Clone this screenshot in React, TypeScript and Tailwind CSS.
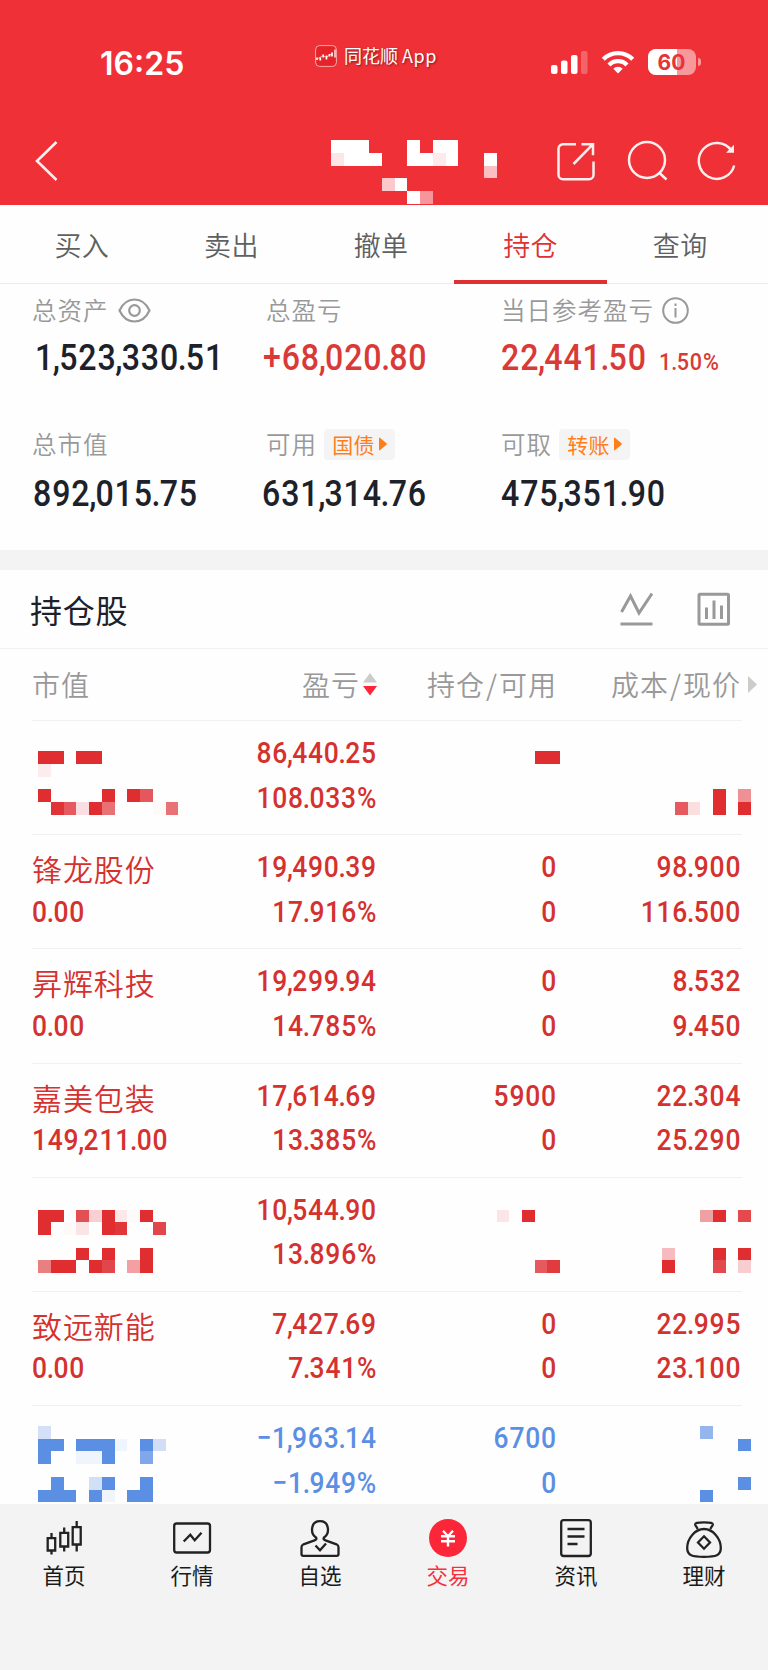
import type { ReactNode } from "react";
import clsx from "clsx";

const TABS = ["买入", "卖出", "撤单", "持仓", "查询"];

type Holding = {
  name?: string;
  value?: string;
  profit: string;
  rate: string;
  position?: string[];
  price?: string[];
  down?: boolean;
};

const HOLDINGS: Holding[] = [
  { profit: "86,440.25", rate: "108.033%" },
  { name: "锋龙股份", value: "0.00", profit: "19,490.39", rate: "17.916%", position: ["0", "0"], price: ["98.900", "116.500"] },
  { name: "昇辉科技", value: "0.00", profit: "19,299.94", rate: "14.785%", position: ["0", "0"], price: ["8.532", "9.450"] },
  { name: "嘉美包装", value: "149,211.00", profit: "17,614.69", rate: "13.385%", position: ["5900", "0"], price: ["22.304", "25.290"] },
  { profit: "10,544.90", rate: "13.896%" },
  { name: "致远新能", value: "0.00", profit: "7,427.69", rate: "7.341%", position: ["0", "0"], price: ["22.995", "23.100"] },
  { profit: "−1,963.14", rate: "−1.949%", position: ["6700", "0"], down: true },
];

// mosaic blocks: [row, column, length, color]
const CELL = 12.732;
const R = "#df2d30";
const B = "#5a8fe4";
const MOSAIC: [number, number, number, string][] = [
  [11, 26, 3, "#fff"], [11, 32, 1, "#fff"], [11, 34, 2, "#fffdfd"],
  [12, 26, 1, "#fde6e8"], [12, 27, 3, "#fff"], [12, 32, 2, "#fff"], [12, 34, 1, "#fdeaec"], [12, 35, 1, "#fff"], [12, 38, 1, "#fff"],
  [13, 38, 1, "#f9bfc2"],
  [14, 30, 1, "#fbc9cc"], [14, 31, 1, "#fff"],
  [15, 32, 1, "#fff"], [15, 33, 1, "#f6959a"],

  [59, 3, 2, R], [59, 6, 2, R], [59, 42, 2, R],
  [60, 3, 1, "#fdecee"],
  [62, 3, 1, R], [62, 8, 1, R], [62, 10, 1, R], [62, 11, 1, "#e5575c"], [62, 56, 1, R], [62, 58, 1, "#ef9194"],
  [63, 4, 1, "#e03338"], [63, 5, 1, "#e5595f"], [63, 6, 1, "#fbdee1"], [63, 7, 1, R], [63, 8, 1, "#e87175"], [63, 12, 1, "#fefafa"],
  [63, 13, 1, "#e87175"], [63, 53, 1, "#e5595f"], [63, 54, 1, "#fbdee0"], [63, 56, 1, R], [63, 58, 1, R],

  [95, 3, 2, R], [95, 6, 1, "#e35054"], [95, 7, 1, "#f9d0d2"], [95, 8, 1, R], [95, 9, 1, "#fde8e9"], [95, 10, 1, "#fefafa"],
  [95, 11, 1, R], [95, 39, 1, "#fce5e6"], [95, 41, 1, R], [95, 55, 1, "#efa0a3"], [95, 56, 1, R], [95, 58, 1, "#e3494d"],
  [96, 3, 1, R], [96, 5, 1, "#fefafa"], [96, 6, 1, "#fbe4e6"], [96, 8, 1, R], [96, 9, 1, "#e0373a"], [96, 12, 1, "#e2454a"],
  [98, 6, 1, R], [98, 8, 1, R], [98, 11, 1, R], [98, 52, 1, "#f5bbbe"], [98, 56, 1, R], [98, 58, 1, R],
  [99, 3, 1, "#ea7f82"], [99, 4, 2, R], [99, 7, 1, R], [99, 8, 1, "#e2454a"], [99, 10, 1, "#f2a0a3"], [99, 11, 1, R],
  [99, 42, 1, "#e5595f"], [99, 43, 1, "#e13a3f"], [99, 52, 1, R], [99, 56, 1, "#e3494d"], [99, 58, 1, "#f8cdd0"],

  [112, 3, 1, "#d3e0f7"], [112, 55, 1, "#95b5ed"],
  [113, 3, 2, B], [113, 6, 3, B], [113, 9, 1, "#eff5fd"], [113, 11, 1, B], [113, 12, 1, "#d1def6"], [113, 58, 1, B],
  [114, 3, 1, B], [114, 6, 2, "#eff4fd"], [114, 8, 1, B], [114, 11, 1, "#7fa7ea"],
  [116, 4, 1, B], [116, 7, 1, "#d1dff7"], [116, 8, 1, B], [116, 11, 1, B], [116, 58, 1, B],
  [117, 3, 3, B], [117, 7, 1, B], [117, 8, 1, "#eff4fd"], [117, 10, 2, B], [117, 55, 1, B],
];

function Mosaic() {
  return (
    <svg className="absolute left-0 top-0 pointer-events-none" width="768" height="1502" shapeRendering="crispEdges">
      {MOSAIC.map(([row, col, len, fill]) => (
        <rect key={`${row}-${col}`} x={col * CELL} y={row * CELL} width={len * CELL} height={CELL} fill={fill} />
      ))}
    </svg>
  );
}

// condensed digits with tighter commas and dots
function Num({ children, right }: { children: string; right?: boolean }) {
  return (
    <span
      className={clsx(
        "inline-block whitespace-nowrap font-['Roboto',sans-serif] font-medium scale-x-[0.88]",
        right ? "origin-right -mr-[1px]" : "origin-left"
      )}
    >
      {children.split(/([.,])/).map((part, i) =>
        i % 2 ? <span key={i} className="-ml-[0.04em] -mr-[0.055em]">{part}</span> : part
      )}
    </span>
  );
}

function StatusBar() {
  return (
    <div className="h-[124px] flex items-center">
      <div className="w-[315px] pl-[100px] pt-[3px] font-['Inter',sans-serif] font-semibold text-[32px] leading-none">16:25</div>
      <div className="w-[234px] flex items-center gap-[7px] pb-[12px]">
        <svg width="22" height="22" viewBox="0 0 22 22" fill="none">
          <rect x="0.6" y="0.6" width="20.8" height="20.8" rx="4" fill="#e52328" stroke="#fff" strokeOpacity="0.6" />
          <path d="M2 12.500v2.500M5.300 12.500v3M8.200 9.500v3M11.500 10.500v4M14.500 9v2.500M17 7.500v4" stroke="#fff" strokeWidth="1.700" />
          <path d="M3 13.500l5-3 3 2 6-4" stroke="#fff" strokeWidth="0.6" />
          <path d="M20 4.500v8" stroke="#fff" strokeWidth="1.300" />
        </svg>
        <span className="pb-[2px] text-[18px] leading-none [text-shadow:1px_1px_2px_rgba(0,0,0,0.45)]">
          同花顺<span className="ml-[4px] tracking-[0.600px]">App</span>
        </span>
      </div>
      <div className="flex items-center">
        <svg width="40" height="26" viewBox="0 0 40 26" fill="#fff">
          <rect x="2" y="16" width="6.500" height="9" rx="2" />
          <rect x="12" y="11.500" width="6.500" height="13.500" rx="2" />
          <rect x="22" y="6" width="6.500" height="19" rx="2" />
          <rect x="32" y="2" width="6.500" height="23" rx="2" fillOpacity="0.25" />
        </svg>
        <svg className="ml-[12px]" width="34" height="26" viewBox="0 0 34 26" fill="none" stroke="#fff" strokeWidth="4.300">
          <path d="M2.300 10.200a20.600 20.600 0 0 1 29.400 0" />
          <path d="M8 15.900a12.600 12.600 0 0 1 18 0" />
          <path d="M17 24.500l-4.700-4.700a6.600 6.600 0 0 1 9.400 0z" fill="#fff" stroke="none" />
        </svg>
        <div className="ml-[13px] relative w-[48px] h-[26px] rounded-[8px] overflow-hidden bg-white/50">
          <div className="w-[29px] h-full bg-white" />
          <span className="absolute inset-0 pt-[1px] pr-[1px] flex items-center justify-center text-[#e5343a] text-[21px] font-bold font-['Inter',sans-serif]">
            60
          </span>
        </div>
        <div className="ml-[2px] w-[2.500px] h-[8px] rounded-r-full bg-white/50" />
      </div>
    </div>
  );
}

function NavBar() {
  return (
    <div className="h-[74px] flex items-center pl-[34px] pr-[31px]">
      <svg className="mr-auto" width="26" height="42" viewBox="0 0 26 42" fill="none" stroke="#ffeeee" strokeWidth="2.600">
        <path d="M22.500 2L3 21l19.500 19" />
      </svg>
      <svg width="40" height="40" viewBox="0 0 40 40" fill="none" stroke="#ffeeee" strokeWidth="2.500" strokeLinejoin="round">
        <path d="M20 3.200H7a4.500 4.500 0 0 0-4.500 4.500v26a4.500 4.500 0 0 0 4.500 4.500h26a4.500 4.500 0 0 0 4.500-4.500V20.500" />
        <path d="M25.500 3.200H37v11M36.500 3.700L17.500 23" strokeLinejoin="miter" />
      </svg>
      <svg className="ml-[31px]" width="42" height="42" viewBox="0 0 42 42" fill="none" stroke="#ffeeee" strokeWidth="2.500">
        <circle cx="20" cy="20" r="18" />
        <path d="M32.500 33l7 6.500" />
      </svg>
      <svg className="ml-[28px]" width="40" height="40" viewBox="0 0 40 40" fill="none" stroke="#ffeeee" strokeWidth="2.500">
        <path d="M37.200 24.500A18 18 0 1 1 34.500 9.500" />
        <path d="M37 3.800v8h-8z" fill="#ffeeee" stroke="none" />
      </svg>
    </div>
  );
}

function Label({ children }: { children: ReactNode }) {
  return <div className="h-[32px] flex items-center text-[24.500px] leading-none tracking-[1px] text-[#999] whitespace-nowrap">{children}</div>;
}

function Tag({ children }: { children: ReactNode }) {
  return (
    <span className="ml-[7px] w-[71px] h-[31px] rounded-[4px] bg-[#f4f4f4] flex items-center justify-center gap-[4px] text-[21px] tracking-[0.200px] text-[#ff7e1c] font-normal">
      {children}
      <svg width="8" height="14" viewBox="0 0 8 14" fill="#ff7e1c">
        <path d="M0 1.500Q0 0 1.200 1L7.500 6.300Q8 7 7.500 7.700L1.200 13Q0 14 0 12.500z" />
      </svg>
    </span>
  );
}

function Summary() {
  return (
    <div className="h-[266px] pl-[32px] grid grid-cols-[234px_235px_1fr] grid-rows-[134px_132px] font-[350]">
      <div className="pt-[10px]">
        <Label>
          总资产
          <svg className="ml-[9px]" width="33" height="25" viewBox="0 0 33 25" fill="none" stroke="#999" strokeWidth="2.200">
            <path d="M1.500 12.500C5 5 10.500 1.500 16.500 1.500S28 5 31.500 12.500C28 20 22.500 23.500 16.500 23.500S5 20 1.500 12.500z" />
            <circle cx="16.500" cy="12.500" r="5.300" />
          </svg>
        </Label>
        <div className="h-[65px] flex items-center pl-[3px] text-[36.500px] text-[#1d2129] tracking-[1px]"><Num>1,523,330.51</Num></div>
      </div>
      <div className="pt-[10px]">
        <Label>总盈亏</Label>
        <div className="h-[65px] flex items-center -ml-[3px] text-[36.500px] text-[#d93a36] tracking-[1px]"><Num>+68,020.80</Num></div>
      </div>
      <div className="pt-[10px]">
        <Label>
          当日参考盈亏
          <svg className="ml-[8px]" width="27" height="27" viewBox="0 0 27 27" fill="none" stroke="#999" strokeWidth="2">
            <circle cx="13.500" cy="13.500" r="12.300" />
            <path d="M13.500 11v9.500M13.500 6.500v2.500" />
          </svg>
        </Label>
        <div className="h-[65px] flex items-center text-[#d93a36]">
          <span className="w-[158px] flex text-[36.500px] tracking-[1px]"><Num>22,441.50</Num></span>
          <span className="pt-[8px] flex text-[24.500px] tracking-[0.900px]"><Num>1.50%</Num></span>
        </div>
      </div>
      <div className="pt-[10px]">
        <Label>总市值</Label>
        <div className="h-[69px] flex items-center pl-[1px] text-[36.500px] text-[#1d2129] tracking-[1px]"><Num>892,015.75</Num></div>
      </div>
      <div className="pt-[10px]">
        <Label>可用<Tag>国债</Tag></Label>
        <div className="h-[69px] flex items-center -ml-[4px] text-[36.500px] text-[#1d2129] tracking-[1px]"><Num>631,314.76</Num></div>
      </div>
      <div className="pt-[10px]">
        <Label>可取<Tag>转账</Tag></Label>
        <div className="h-[69px] flex items-center text-[36.500px] text-[#1d2129] tracking-[1px]"><Num>475,351.90</Num></div>
      </div>
    </div>
  );
}

function Pair({ values = [] }: { values?: string[] }) {
  return (
    <div className="text-right">
      {values.map((v, i) => (
        <div key={i} className="h-[44.500px]"><Num right>{v}</Num></div>
      ))}
    </div>
  );
}

function HoldingRow({ item }: { item: Holding }) {
  return (
    <div
      className={clsx(
        "shrink-0 h-[114.200px] ml-[32px] w-[710px] pt-[7px] border-b border-[#f1f1f1] grid grid-cols-[190px_154px_180px_184px] text-[30px] leading-[44.500px] tracking-[0.900px]",
        item.down ? "text-[#5a8fe4]" : "text-[#d5312f]"
      )}
    >
      <div className="whitespace-nowrap">
        <div className="h-[44.500px] pt-[4px] font-[350]">{item.name}</div>
        <div className="h-[44.500px]">{item.value && <Num>{item.value}</Num>}</div>
      </div>
      <Pair values={[item.profit, item.rate]} />
      <Pair values={item.position} />
      <Pair values={item.price} />
    </div>
  );
}

function NavItem({ label, active, children }: { label: string; active?: boolean; children: ReactNode }) {
  return (
    <div className={clsx("w-[128px] flex flex-col items-center", active ? "text-[#f5303c]" : "text-[#1a1a1a]")}>
      <svg width="44" height="44" viewBox="0 0 44 44" fill="none" stroke="#222" strokeWidth="2.300">
        {children}
      </svg>
      <span className="mt-[1px] text-[21.500px] leading-[28px]">{label}</span>
    </div>
  );
}

function BottomNav() {
  return (
    <div className="h-[166px] pt-[12px] flex bg-[#f3f3f3]">
      <NavItem label="首页">
        <path d="M9.500 17v5M9.500 34.500v4M22.200 11.500v5M22.200 30.500v5M34.700 5v6M34.700 28.500v7" />
        <path d="M5.700 22.200h7.500v12.300H5.700zM18.300 16.800h7.900v13.700h-7.900zM30.700 11.200h8v17.300h-8z" />
      </NavItem>
      <NavItem label="行情">
        <rect x="4.200" y="7.500" width="35.800" height="29" rx="2.500" />
        <path d="M13.700 25.500l6.600-6.800 4.400 5.600 6.800-7.600" />
      </NavItem>
      <NavItem label="自选">
        <path d="M18 21.500C12 17.500 12.500 5.200 22 5.200s10 12.300 4 16.300c-1 1.500 0 2.300 1.500 2.800l11 4c1.500.7 2 1.500 2 3V38c0 1.200-.7 1.800-1.800 1.800H5.300c-1.100 0-1.800-.6-1.800-1.800v-6.700c0-1.500.5-2.300 2-3l11-4c1.500-.5 2.500-1.300 1.500-2.800z" />
        <path d="M17.500 29.500l4.500 4.700 6-6.700" />
      </NavItem>
      <NavItem label="交易" active>
        <circle cx="22" cy="22" r="19" fill="#fb2638" stroke="none" />
        <path d="M17 14.800l5 5.400 5-5.400M15 20.300h14M15 25.200h14M22 20v10.500" stroke="#fff" strokeWidth="2.400" />
      </NavItem>
      <NavItem label="资讯">
        <rect x="7.200" y="4.200" width="29.600" height="35.800" rx="2.500" />
        <path d="M13.500 13h17M13.500 20.500h17M13.500 28h10" />
      </NavItem>
      <NavItem label="理财">
        <path d="M15.500 13c-.5-2-2-3-2.300-4.300C13 7 15 6.300 22 6.300s9 .7 8.800 2.400C30.500 10 29 11 28.500 13" />
        <path d="M22 13c-9 0-16.800 9.500-16.800 19 0 7.500 5 8.800 16.800 8.800s16.800-1.300 16.800-8.800C38.800 22.500 31 13 22 13z" />
        <path d="M22 20.300l6 6.200-6 6.200-6-6.200z" />
      </NavItem>
    </div>
  );
}

export default function App() {
  return (
    <div className="relative w-[768px] h-[1670px] overflow-hidden flex flex-col bg-[#fefefe] font-['Noto_Sans_CJK_SC',sans-serif]">
      <div className="h-[205px] shrink-0 bg-[#ef3036] text-white">
        <StatusBar />
        <NavBar />
      </div>

      <div className="h-[79px] shrink-0 pl-[7px] pr-[13px] flex border-b border-[#ebebeb]">
        {TABS.map((tab) => (
          <div
            key={tab}
            className={clsx(
              "relative flex-1 h-[79px] pt-[2px] flex items-center justify-center text-[27px] tracking-[0.300px] font-[350]",
              tab === "持仓" ? "text-[#e03032]" : "text-[#606060]"
            )}
          >
            {tab}
            {tab === "持仓" && <span className="absolute -inset-x-[2px] bottom-0 h-[4px] bg-[#e03032]" />}
          </div>
        ))}
      </div>

      <Summary />
      <div className="h-[20px] shrink-0 bg-[#f3f3f3]" />

      <div className="h-[79px] shrink-0 pl-[30px] pr-[38px] flex items-center justify-between border-b border-[#f1f1f1]">
        <h2 className="text-[32px] leading-none tracking-[0.800px] text-[#1d2129]">持仓股</h2>
        <div className="flex items-center gap-[44px]">
          <svg width="33" height="34" viewBox="0 0 33 34" fill="none" stroke="#999" strokeWidth="3">
            <path d="M1.500 20L10.500 4l8.500 17L32 1.500M0.500 32H32.500" />
          </svg>
          <svg width="33" height="34" viewBox="0 0 33 34" fill="none" stroke="#999" strokeWidth="3">
            <rect x="2" y="2.200" width="29.500" height="30" rx="1" />
            <path d="M9.500 15.500v11.500M17 8.500V27M24.500 13.500V27" />
          </svg>
        </div>
      </div>

      <div className="h-[72px] shrink-0 ml-[32px] w-[710px] pb-[1px] flex items-center border-b border-[#f1f1f1] text-[28px] tracking-[1px] text-[#999] font-[350] whitespace-nowrap">
        <div className="w-[190px] shrink-0">市值</div>
        <div className="w-[155px] shrink-0 flex items-center justify-end gap-[3px]">
          盈亏
          <svg width="14" height="24" viewBox="0 0 14 24">
            <path d="M7 1l7 9.500H0z" fill="#ccc" />
            <path d="M7 23.500l7-9.500H0z" fill="#fb2638" />
          </svg>
        </div>
        <div className="w-[180px] shrink-0 text-right">持仓<span className="mx-[1px]">/</span>可用</div>
        <div className="w-[184px] shrink-0 text-right">成本<span className="mx-[1px]">/</span>现价</div>
        <svg className="ml-[7px] shrink-0" width="9" height="17" viewBox="0 0 9 17" fill="#ccc">
          <path d="M0 0l9 8.500L0 17z" />
        </svg>
      </div>

      <div className="h-[783px] shrink-0 flex flex-col overflow-hidden">
        {HOLDINGS.map((item) => (
          <HoldingRow key={item.profit} item={item} />
        ))}
      </div>

      <BottomNav />
      <Mosaic />
    </div>
  );
}
